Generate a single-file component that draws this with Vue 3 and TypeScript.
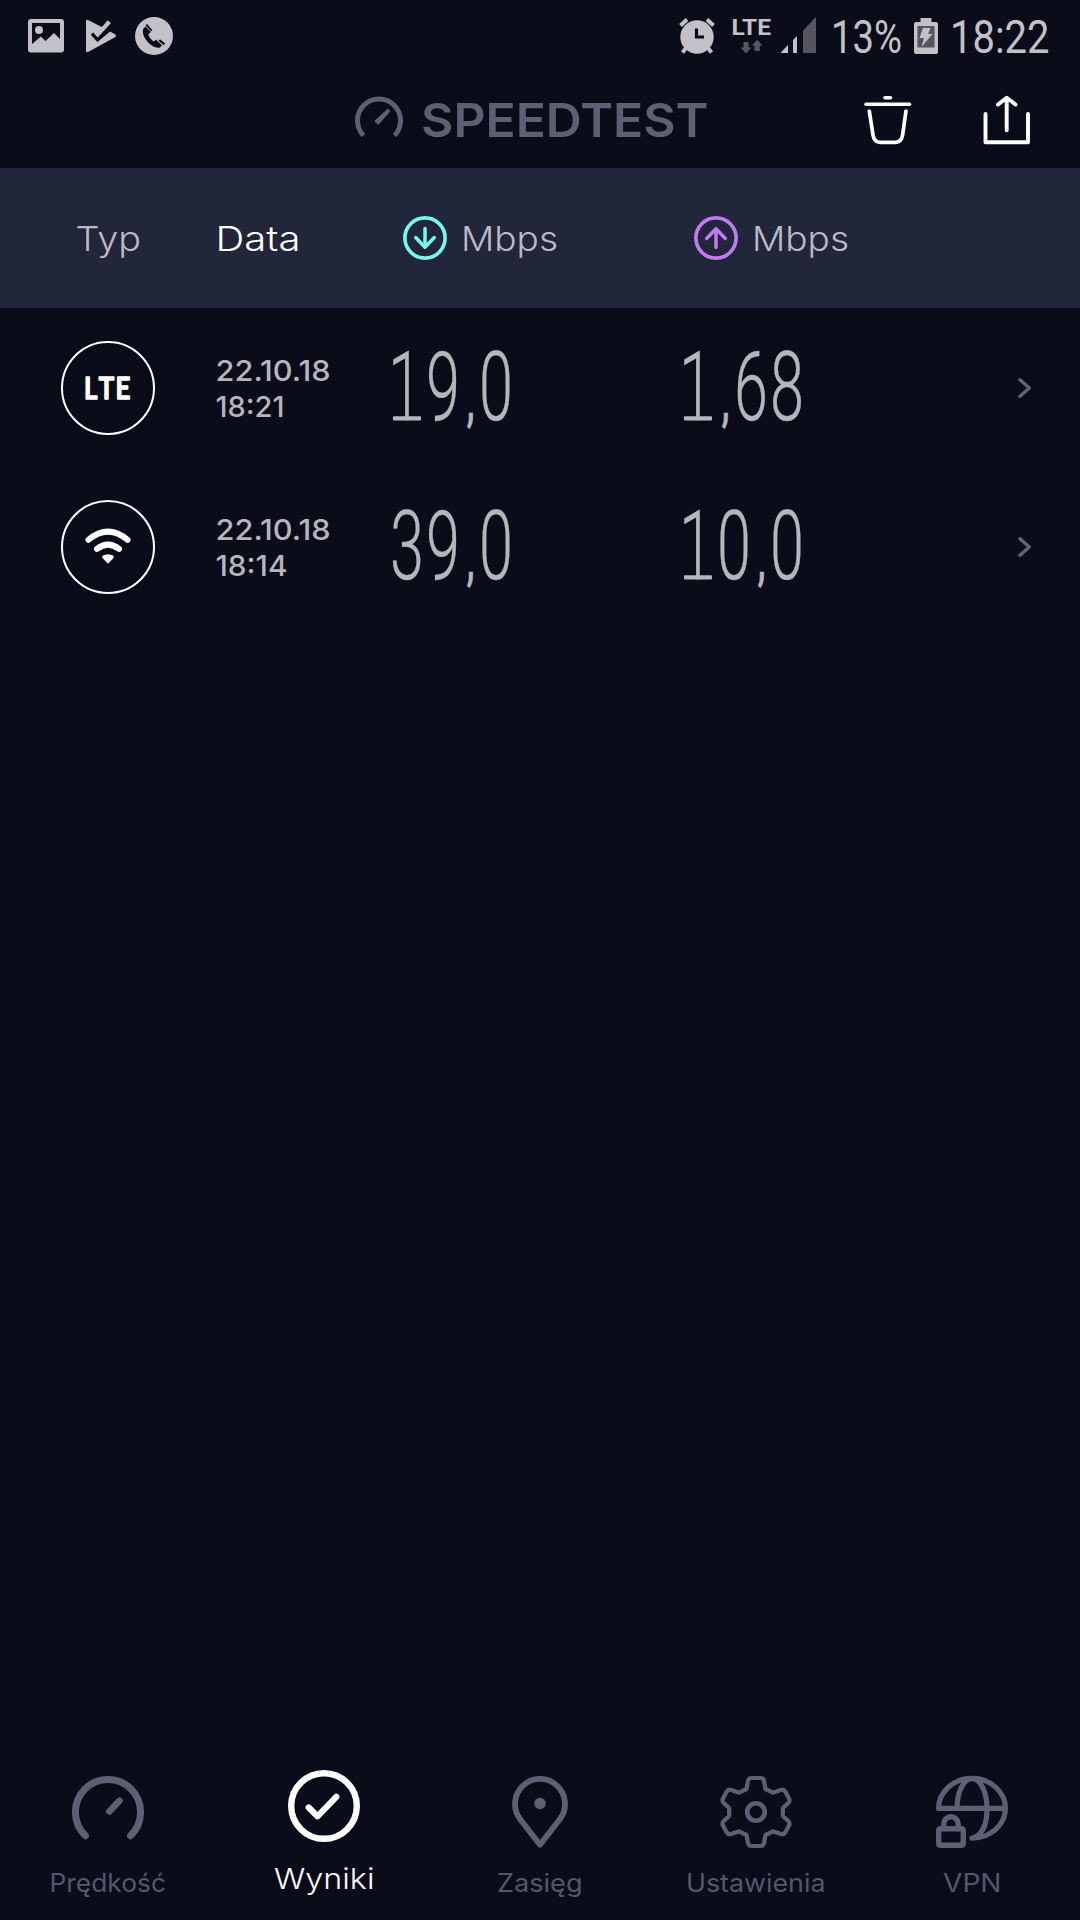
<script setup lang="ts">
import { h } from 'vue'

interface FitProps {
  text: string
  w: number
  size: number
  weight?: number
  family?: string
  lead?: number
  trail?: number
}

// One line of text fitted to a fixed width; the box is as tall as the capitals.
const Fit = (p: FitProps) => {
  const cap = p.size * 0.727
  const lead = p.lead ?? p.size * 0.08
  const trail = p.trail ?? p.size * 0.06
  return h(
    'svg',
    { width: p.w, height: cap, style: { display: 'block', overflow: 'visible', flex: 'none' } },
    [
      h(
        'text',
        {
          x: -lead,
          y: cap,
          textLength: p.w + lead + trail,
          lengthAdjust: 'spacingAndGlyphs',
          fill: 'currentColor',
          'font-size': p.size,
          'font-weight': p.weight ?? 400,
          'font-family': p.family ?? 'Inter, "Open Sans", sans-serif',
        },
        p.text,
      ),
    ],
  )
}
Fit.props = ['text', 'w', 'size', 'weight', 'family', 'lead', 'trail']

const ROBOTO = 'Roboto, sans-serif'
const SQUEEZE = 0.63

interface Glyph {
  c: string
  x: number
  foot: number | null
}

// Lays digits in 36px cells and commas in 17px cells.
function layout(value: string): Glyph[] {
  let at = 0
  return [...value].map((c) => {
    const cell = c === ',' ? 17 : 36
    const mid = at + cell / 2
    at += cell
    const one = c === '1'
    const nudge = one ? -2 : c === ',' ? 1 : 0
    return { c, x: (mid + nudge) / SQUEEZE, foot: one ? mid : null }
  })
}

interface Result {
  kind: 'lte' | 'wifi'
  date: string
  time: string
  timeWidth: number
  values: Glyph[][]
}

const results: Result[] = [
  { kind: 'lte', date: '22.10.18', time: '18:21', timeWidth: 66, values: [layout('19,0'), layout('1,68')] },
  { kind: 'wifi', date: '22.10.18', time: '18:14', timeWidth: 69, values: [layout('39,0'), layout('10,0')] },
]
</script>

<template>
  <div class="screen">
    <div class="status">
      <svg class="s-img" width="36" height="72" viewBox="28 0 36 72">
        <path fill-rule="evenodd" d="M31 19H61Q64 19 64 22V49.500Q64 52.500 61 52.500H31Q28 52.500 28 49.500V22Q28 19 31 19ZM32 23V44L41 36.500L45.500 41L54 33L60 39V23Z" />
        <circle cx="39" cy="30" r="4" />
      </svg>
      <svg class="s-play" width="31" height="72" viewBox="86 0 31 72">
        <path d="M86 21.500Q86 19 88.500 20.200L102.300 27.300L107.500 20.500L111 23L98.500 36.500L97.500 41L109 31L115 34.200Q117 35.700 115 37.300L88.500 51.800Q86 52.800 86 50.500Z" />
        <path d="M92 33.500L97.600 39.500L109.500 29.500" fill="none" stroke="#0a0c1a" stroke-width="3.600" />
        <path d="M94.800 31.500L97.700 34.800L109 21.800" fill="none" stroke="#c2c1c8" stroke-width="3.600" />
      </svg>
      <svg class="s-phone" width="38" height="72" viewBox="135 0 38 72">
        <circle cx="154" cy="36" r="19" />
        <path d="M143.200 28.800Q141.500 35 147.500 41.800Q153.500 48.500 159.500 47.700L162 45.500L156 39.700L153.500 41.500Q149.500 38.500 148.200 34.500L150.800 32L145.500 26.500Z" fill="#0a0c1a" />
        <path d="M145.500 25.300L147 24L152.300 30L151 31.300ZM158.500 40.800L160 39.200L165.200 43.500L163.500 45.300Z" fill="#0a0c1a" />
      </svg>
      <svg class="s-alarm" width="38" height="72" viewBox="678 0 38 72">
        <circle cx="697" cy="37" r="16.700" />
        <path class="line" d="M680.500 25.500L687 19.500M713.500 25.500L707 19.500" stroke-width="4" />
        <path class="line" d="M686 48L682.500 52.500M708 48L711.500 52.500" stroke-width="4" />
        <path d="M696.500 28.500V37H704" fill="none" stroke="#0a0c1a" stroke-width="3.200" />
      </svg>
      <div class="s-lte">
        <Fit text="LTE" :w="37" :size="22.5" :weight="700" :family="ROBOTO" :lead="1.5" :trail="1" />
        <svg width="24" height="14" viewBox="740 40 24 14" fill="#54555f">
          <path d="M743.500 42H748.500V47.500H751.500L746 53.500L740.500 47.500H743.500ZM754.500 51V45.500H751.700L757.200 39.800L762.700 45.500H759.800V51Z" />
        </svg>
      </div>
      <svg class="s-signal" width="37" height="72" viewBox="780 0 37 72">
        <path d="M780.300 53L788 45V53ZM793 40L797 36V53H793Z" />
        <path d="M803 30.500L816 17V53H803Z" fill="#54555f" />
      </svg>
      <div class="s-pct"><Fit text="13%" :w="68" :size="45.7" :family="ROBOTO" :lead="2" :trail="1" /></div>
      <svg class="s-batt" width="24" height="72" viewBox="914 0 24 72">
        <path d="M920.500 18H931.500V22H936Q938 22 938 24V52Q938 54 936 54H916Q914 54 914 52V24Q914 22 916 22H920.500Z" />
        <path d="M917.500 26H934.500V47.500H917.500Z" fill="#54555f" />
        <path d="M923 28H930.500L928 34H932.500L921.500 47L924 38H919.500Z" />
      </svg>
      <div class="s-time"><Fit text="18:22" :w="95" :size="45.7" :family="ROBOTO" :lead="3" :trail="1.5" /></div>
    </div>

    <header class="bar">
      <svg class="logo" width="48" height="42" viewBox="355 95 48 42">
        <path d="M363.500 135.500A21.500 21.500 0 1 1 394.500 135.500" fill="none" stroke="currentColor" stroke-width="5" />
        <path d="M374.300 121L387.800 108.600L390.500 111.200L378.200 125Z" fill="currentColor" />
      </svg>
      <Fit class="brand" text="SPEEDTEST" :w="284" :size="47" :weight="600" :lead="2" :trail="1.500" />
      <svg class="trash" width="48" height="50" viewBox="864 95 48 50">
        <path d="M885 97.700H890.500" stroke-width="3.600" />
        <path d="M866 104.300H909.500" stroke-width="3.500" />
        <path d="M869.300 111L873 135Q874 142.300 880.500 142.300H895.500Q901.500 142.300 902.600 135L906 111" stroke-width="3.700" />
      </svg>
      <svg class="share" width="48" height="50" viewBox="983.500 95 48 50">
        <path d="M1007.200 98.500V130.300M998.500 104.500L1007.200 97.700L1016 104.500" stroke-width="3.900" />
        <path d="M986 114V142.300H1028.500V114" stroke-width="3.900" />
      </svg>
    </header>

    <div class="grid head">
      <div class="type"><Fit text="Typ" :w="62" :size="34.4" :weight="350" :lead="1.5" :trail="2" /></div>
      <div class="when on"><Fit text="Data" :w="81" :size="34.4" :weight="350" :lead="2.5" :trail="1.5" /></div>
      <div class="unit">
        <svg class="down" width="44" height="44" viewBox="-22 -22 44 44">
          <circle r="20.100" stroke-width="3.700" />
          <path d="M0 -9.500V9M-9.300 -0.500L0 9.200L9.300 -0.500" stroke-width="3.500" />
        </svg>
        <Fit text="Mbps" :w="92.5" :size="34.4" :weight="350" :lead="3" :trail="1.5" />
      </div>
      <div class="unit">
        <svg class="up" width="44" height="44" viewBox="-22 -22 44 44">
          <circle r="20.100" stroke-width="3.700" />
          <path d="M0 9.500V-9M-9.300 0.500L0 -9.200L9.300 0.500" stroke-width="3.500" />
        </svg>
        <Fit text="Mbps" :w="92.5" :size="34.4" :weight="350" :lead="3" :trail="1.5" />
      </div>
    </div>

    <div v-for="r in results" :key="r.time" class="grid row">
      <div class="type">
        <div class="ring">
          <svg v-if="r.kind === 'lte'" width="60" height="40" viewBox="-30 -20 60 40">
            <text class="lte" transform="scale(0.86 1)" x="-27.800 -10.900 8.700" y="11">LTE</text>
          </svg>
          <svg v-else width="60" height="40" viewBox="-30 -20 60 40">
            <path class="wave" d="M-19.500 -7.200Q0 -23.500 19.500 -7.200" />
            <path class="wave" d="M-11 1.900Q0 -6.800 11 1.900" />
            <path d="M-5.500 8.800Q0 5.500 5.500 8.800Q6.400 10 5 11.400L0.800 16Q0 16.800 -0.800 16L-5 11.400Q-6.400 10 -5.500 8.800Z" fill="#fff" />
          </svg>
        </div>
      </div>
      <div class="when stack">
        <Fit :text="r.date" :w="112" :size="29" :weight="500" :lead="1.5" :trail="1.5" />
        <Fit :text="r.time" :w="r.timeWidth" :size="29" :weight="500" :lead="1.5" :trail="1.5" />
      </div>
      <svg v-for="(glyphs, i) in r.values" :key="i" class="num" width="125" height="70" viewBox="0 0 125 70">
        <text class="digits" y="69.300" :transform="`scale(${SQUEEZE} 1)`"><tspan v-for="(g, n) in glyphs" :key="n" :x="g.x" :class="{ comma: g.c === ',' }">{{ g.c }}</tspan></text>
        <template v-for="(g, n) in glyphs" :key="n">
          <rect v-if="g.foot !== null" :x="g.foot - 14" y="65.300" width="28" height="4.300" rx="1" fill="currentColor" />
        </template>
      </svg>
      <svg class="chev" width="14" height="22" viewBox="-7 -11 14 22"><path d="M-5 -8.300L4.200 0L-5 8.300" /></svg>
    </div>

    <nav class="tabs">
      <div class="tab">
        <svg width="80" height="80" viewBox="-40 -40 80 80">
          <path d="M-22.500 23.700A32.600 32.600 0 1 1 22.500 23.700" stroke-width="7" />
          <path d="M1.300 -0.500L11.500 -11.300" stroke-width="6.500" />
        </svg>
        <Fit text="Prędkość" :w="114" :size="25" :weight="370" :lead="1.5" :trail="1" />
      </div>
      <div class="tab active">
        <svg width="80" height="80" viewBox="-40 -40 80 80">
          <circle r="32.800" stroke-width="6.400" />
          <path d="M-15.300 1.500L-6.500 10.300L12.300 -9.200" stroke-width="6.200" />
        </svg>
        <Fit text="Wyniki" :w="98" :size="28.5" :weight="350" :lead="1" :trail="1.5" />
      </div>
      <div class="tab">
        <svg width="80" height="80" viewBox="-40 -40 80 80">
          <path d="M0 32.800L-19.800 7.200A25 25 0 1 1 19.800 7.200Z" stroke-width="5.800" />
          <circle cy="-8.500" r="5.700" class="solid" />
        </svg>
        <Fit text="Zasięg" :w="82" :size="25" :weight="370" :lead="2" :trail="1.5" />
      </div>
      <div class="tab">
        <svg width="80" height="80" viewBox="-40 -40 80 80">
          <path stroke-width="4.200" d="M-4.500 -34H4.500Q7.300 -34 8 -31.300L9.500 -23L17 -19.300L24.800 -22Q27.500 -23 29.200 -20.500L33 -13.500Q34.300 -11 32.300 -9L26.800 -4V4L32.300 9Q34.300 11 33 13.500L29.200 20.500Q27.500 23 24.800 22L17 19.300L9.500 23L8 31.300Q7.300 34 4.500 34H-4.500Q-7.300 34 -8 31.300L-9.500 23L-17 19.300L-24.800 22Q-27.500 23 -29.200 20.500L-33 13.500Q-34.300 11 -32.300 9L-26.800 4V-4L-32.300 -9Q-34.300 -11 -33 -13.500L-29.200 -20.500Q-27.500 -23 -24.800 -22L-17 -19.300L-9.500 -23L-8 -31.300Q-7.300 -34 -4.500 -34Z" />
          <circle r="8.800" stroke-width="4.600" />
        </svg>
        <Fit text="Ustawienia" :w="136" :size="25" :weight="370" :lead="2" :trail="1.5" />
      </div>
      <div class="tab">
        <svg width="80" height="80" viewBox="932 1772 80 80">
          <path stroke-width="5.200" d="M972 1838.200A33.400 29.900 0 1 0 938.600 1808.400H1005M957 1808A15 29.500 0 0 1 987 1808.400Q987 1834 972 1838.200" />
          <path stroke-width="5.400" d="M941 1828.700H961Q963.300 1828.700 963.300 1831V1843Q963.300 1845.300 961 1845.300H941Q938.700 1845.300 938.700 1843V1831Q938.700 1828.700 941 1828.700ZM943.800 1828V1824A7.200 7.300 0 0 1 958.200 1824V1828" />
        </svg>
        <Fit text="VPN" :w="55" :size="25" :weight="370" :lead="2" :trail="1.5" />
      </div>
    </nav>
  </div>
</template>

<style>
body {
  margin: 0;
  background: #0a0c1a;
}
</style>

<style scoped>
.screen {
  width: 1080px;
  height: 1920px;
  display: flex;
  flex-direction: column;
  overflow: hidden;
  background: #0a0c1a;
  font-family: Inter, "Open Sans", sans-serif;
}
svg {
  display: block;
  flex: none;
}
.status {
  height: 72px;
  display: flex;
  align-items: flex-start;
  color: #c2c1c8;
  fill: #c2c1c8;
}
.status .line {
  fill: none;
  stroke: #c2c1c8;
}
.s-img { margin-left: 28px; }
.s-play { margin-left: 22px; }
.s-phone { margin-left: 18px; }
.s-alarm { margin-left: 505px; }
.s-lte {
  margin: 19px 0 0 17px;
  display: flex;
  flex-direction: column;
  gap: 5px;
}
.s-lte svg:last-child { margin-left: 7px; }
.s-signal { margin-left: 10px; }
.s-pct { margin: 19.8px 0 0 16px; }
.s-batt { margin-left: 13px; }
.s-time { margin: 19.8px 0 0 15px; }

.bar {
  height: 96px;
  display: flex;
  align-items: flex-start;
  color: #5e5f73;
}
.logo { margin: 23px 0 0 355px; }
.brand { margin: 30.7px 0 0 20px; }
.trash,
.share {
  margin-top: 23px;
  fill: none;
  stroke: #fff;
  stroke-linecap: round;
  stroke-linejoin: round;
}
.trash { margin-left: 157px; }
.share { margin-left: 71px; }

.grid {
  display: grid;
  grid-template-columns: 216px 173px 291px 338px 62px;
  align-items: center;
}
.head {
  height: 140px;
  background: #21263a;
  color: #b9bac5;
  box-sizing: border-box;
}
.type {
  display: flex;
  justify-content: center;
}
.when { padding-left: 2px; }
.on { color: #fff; }
.unit {
  display: flex;
  align-items: center;
  padding-left: 14px;
  gap: 17px;
}
.down,
.up {
  fill: none;
  stroke-linecap: round;
  stroke-linejoin: round;
}
.down { stroke: #77f6ec; }
.up { stroke: #c27af1; }

.row {
  height: 159px;
  color: #b5b5bc;
}
.ring {
  width: 94px;
  height: 94px;
  box-sizing: border-box;
  border: 2px solid #fff;
  border-radius: 50%;
  display: flex;
  align-items: center;
  justify-content: center;
}
.lte {
  font: 600 30px Lato, sans-serif;
  fill: #fff;
  stroke: #fff;
  stroke-width: 1.6;
  stroke-linejoin: round;
}
.wave {
  fill: none;
  stroke: #fff;
  stroke-width: 6;
  stroke-linecap: round;
}
.stack {
  display: flex;
  flex-direction: column;
  gap: 15px;
  padding: 2px 0 0 1px;
}
.num {
  overflow: visible;
  margin-top: -4px;
}
.digits {
  font: 300 97px Roboto, sans-serif;
  fill: currentColor;
  stroke: currentColor;
  stroke-width: 0.4;
  text-anchor: middle;
}
.comma {
  font-size: 58px;
  font-weight: 500;
}
.chev path {
  fill: none;
  stroke: #626378;
  stroke-width: 3.4;
  stroke-linecap: round;
  stroke-linejoin: round;
}

.tabs {
  margin-top: auto;
  height: 148px;
  display: grid;
  grid-template-columns: repeat(5, 216px);
  color: #54566a;
}
.tab {
  display: flex;
  flex-direction: column;
  align-items: center;
  gap: 22px;
}
.tab > svg:first-child {
  fill: none;
  stroke: #5e5f73;
  stroke-linecap: round;
  stroke-linejoin: round;
}
.tab .solid {
  fill: #5e5f73;
  stroke: none;
}
.active {
  color: #fff;
  margin-top: -6px;
}
.tab.active > svg:first-child { stroke: #fff; }
</style>
